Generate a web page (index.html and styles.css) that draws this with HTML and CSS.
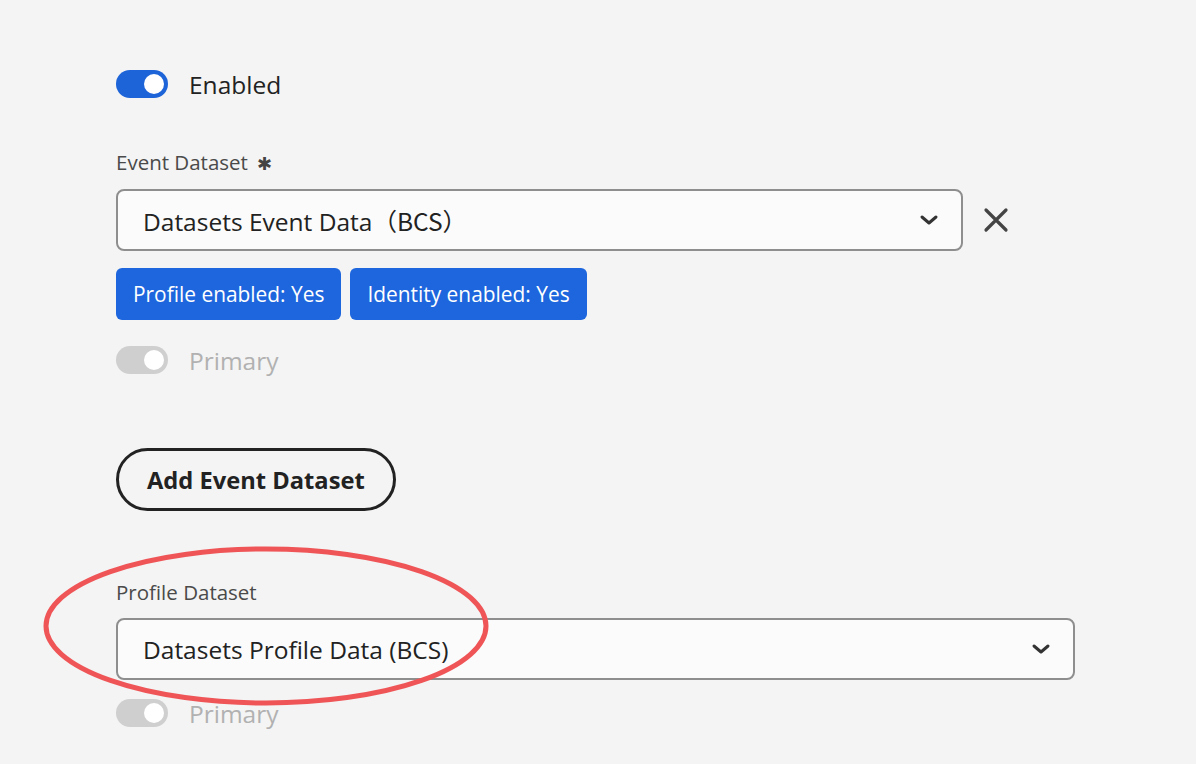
FILE: index.html
```html
<!DOCTYPE html>
<html>
<head>
<meta charset="utf-8">
<link rel="stylesheet" href="styles.css">
</head>
<body>
<div class="page">
  <div class="switch-row enabled-row">
    <span class="switch on"><span class="knob"></span></span>
    <span class="switch-label">Enabled</span>
  </div>

  <div class="field event-field">
    <div class="label">Event Dataset <span class="req">✱</span></div>
    <div class="select-row">
      <div class="select event-select">
        <span class="value">Datasets Event Data<span class="cjk">（BCS）</span></span>
        <svg class="chev" width="20" height="12" viewBox="0 0 20 12"><path d="M3 3 L10 9 L17 3" fill="none" stroke="#333" stroke-width="3" stroke-linecap="round" stroke-linejoin="round"/></svg>
      </div>
      <svg class="close" width="26" height="26" viewBox="0 0 26 26"><path d="M3 3 L23 23 M23 3 L3 23" stroke="#444" stroke-width="3.2" stroke-linecap="round"/></svg>
    </div>
    <div class="tags">
      <span class="tag">Profile enabled: Yes</span>
      <span class="tag">Identity enabled: Yes</span>
    </div>
    <div class="switch-row disabled">
      <span class="switch off"><span class="knob"></span></span>
      <span class="switch-label">Primary</span>
    </div>
  </div>

  <button class="add-btn">Add Event Dataset</button>

  <div class="field profile-field">
    <div class="label">Profile Dataset</div>
    <div class="select profile-select">
      <span class="value">Datasets Profile Data (BCS)</span>
      <svg class="chev" width="20" height="12" viewBox="0 0 20 12"><path d="M3 3 L10 9 L17 3" fill="none" stroke="#333" stroke-width="3" stroke-linecap="round" stroke-linejoin="round"/></svg>
    </div>
    <div class="switch-row disabled">
      <span class="switch off"><span class="knob"></span></span>
      <span class="switch-label">Primary</span>
    </div>
    <svg class="circle" width="460" height="170" viewBox="0 0 460 170"><ellipse cx="230" cy="85" rx="220" ry="77" fill="none" stroke="#ef5557" stroke-width="5"/></svg>
  </div>
</div>
</body>
</html>
```

FILE: styles.css
```css
html, body {
  margin: 0;
  padding: 0;
  background: #f4f4f4;
}
body {
  font-family: "Open Sans", "Noto Sans", sans-serif;
  color: #222;
  width: 1196px;
  height: 764px;
  overflow: hidden;
}
.page {
  padding: 70px 0 0 116px;
  display: flex;
  flex-direction: column;
  align-items: flex-start;
}
.switch-row {
  display: flex;
  align-items: center;
  gap: 21px;
  height: 28px;
}
.switch {
  width: 52px;
  height: 28px;
  border-radius: 14px;
  position: relative;
  box-sizing: border-box;
}
.switch.on { background: #1d64d8; }
.switch.off { background: #cfcfcf; }
.knob {
  position: absolute;
  top: 4px;
  right: 4px;
  width: 20px;
  height: 20px;
  border-radius: 50%;
  background: #fff;
}
.switch-label {
  font-size: 24.5px;
  color: #222;
}
.disabled .switch-label { color: #b1b1b1; }
.label {
  font-size: 20.5px;
  color: #4a4a4a;
  line-height: 26px;
}
.req { font-size: 18px; margin-left: 4px; color: #444; }
.event-field { margin-top: 51px; }
.field { display: flex; flex-direction: column; align-items: flex-start; }
.select-row {
  display: flex;
  align-items: center;
  gap: 20px;
  margin-top: 13px;
}
.select {
  height: 62px;
  box-sizing: border-box;
  border: 2px solid #8e8e8e;
  border-radius: 8px;
  background: #fbfbfb;
  display: flex;
  align-items: center;
  justify-content: space-between;
  padding: 0 22px 0 25px;
}
.event-select { width: 847px; }
.profile-select { width: 959px; margin-top: 13px; }
.value {
  font-size: 24.5px;
  color: #222;
}
.cjk { font-family: "Noto Sans CJK SC", sans-serif; }
.close { display: block; }
.tags {
  display: flex;
  gap: 9px;
  margin-top: 17px;
}
.tag {
  background: #1d66dd;
  color: #fff;
  height: 52px;
  border-radius: 6px;
  padding: 0 17px;
  display: flex;
  align-items: center;
  font-size: 20.9px;
}
.event-field .switch-row { margin-top: 26px; }
.add-btn {
  margin-top: 74px;
  height: 63px;
  padding: 0 28px;
  border: 3px solid #222;
  border-radius: 32px;
  background: transparent;
  font-family: "Open Sans", "Noto Sans", sans-serif;
  font-weight: 700;
  font-size: 23.7px;
  color: #222;
}
.profile-field { margin-top: 68px; position: relative; }
.profile-field .switch-row { margin-top: 19px; }
.circle {
  position: absolute;
  left: -80px;
  top: -38px;
  pointer-events: none;
}
```
